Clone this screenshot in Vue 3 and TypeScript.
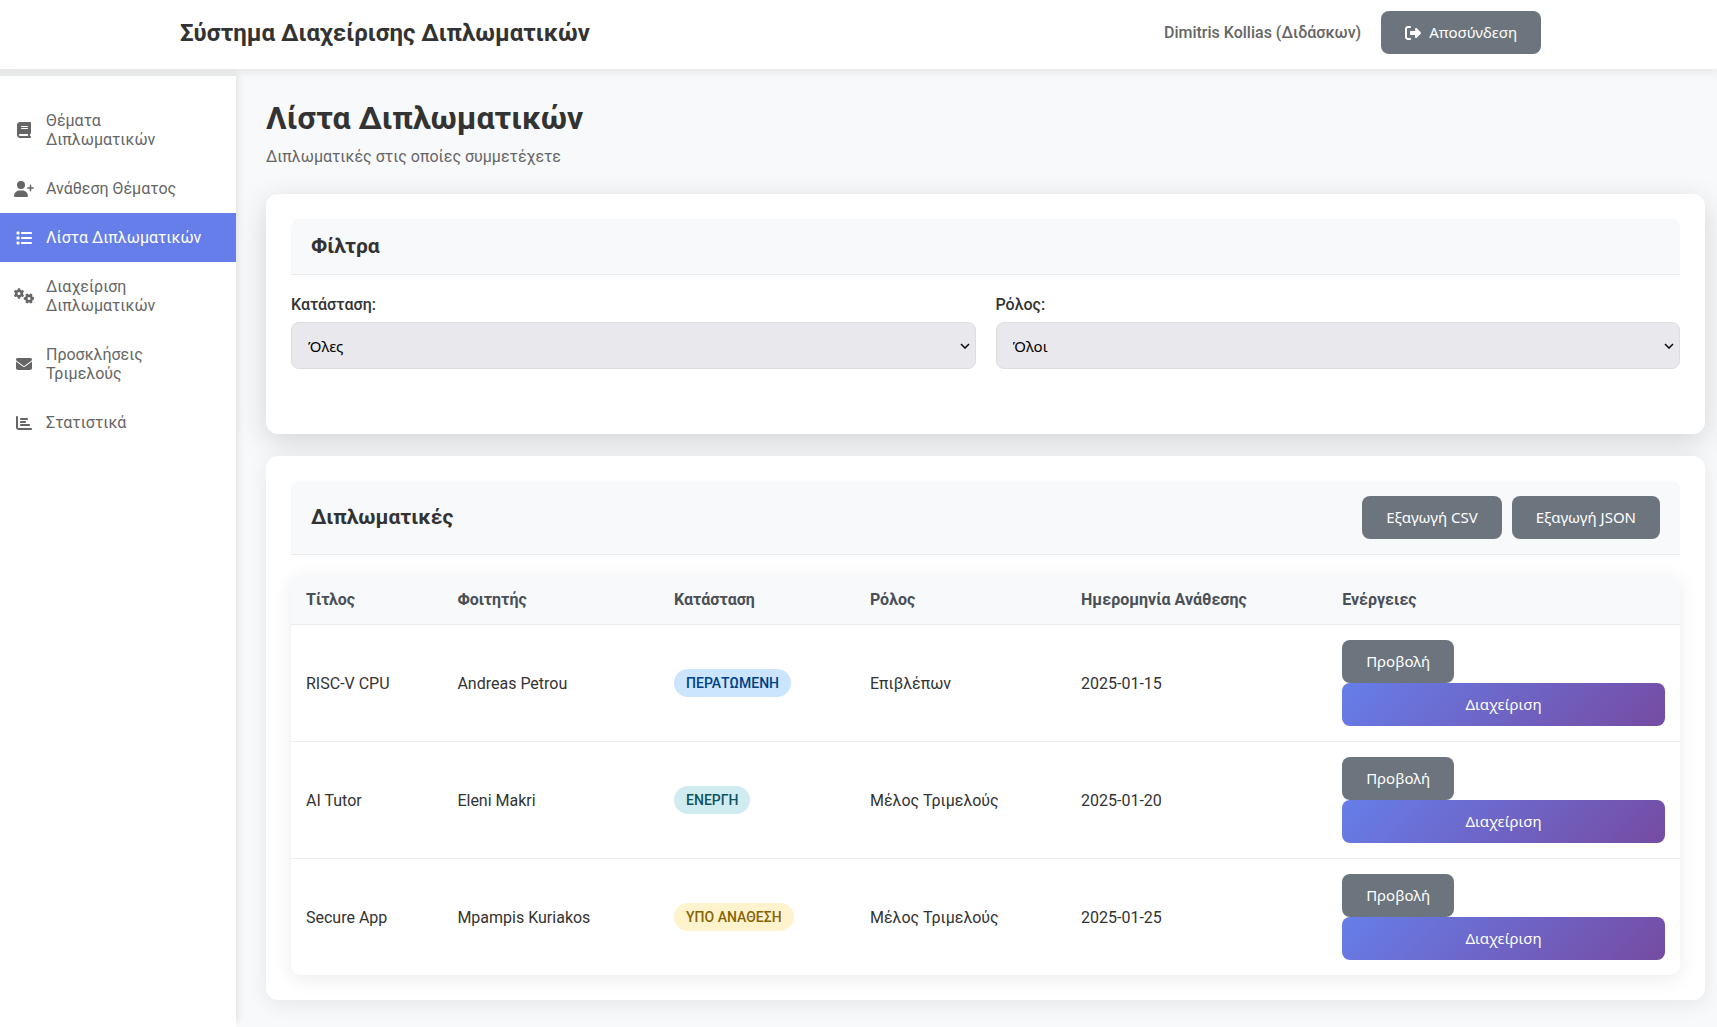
<script setup lang="ts">
import { ref } from 'vue'

interface NavItem {
  label: string
  width: number
  path: string
  active?: boolean
  twin?: string
}

interface Thesis {
  title: string
  student: string
  status: string
  tone: string
  role: string
  date: string
}

const navItems: NavItem[] = [
  {
    label: 'Θέματα Διπλωματικών',
    width: 448,
    path: 'M96 0C43 0 0 43 0 96V416c0 53 43 96 96 96H384h32c17.7 0 32-14.3 32-32s-14.3-32-32-32V384c17.7 0 32-14.3 32-32V32c0-17.7-14.3-32-32-32H384 96zm0 384H352v64H96c-17.7 0-32-14.3-32-32s14.3-32 32-32zm32-240c0-8.8 7.2-16 16-16H336c8.8 0 16 7.2 16 16s-7.2 16-16 16H144c-8.8 0-16-7.2-16-16zm16 48H336c8.8 0 16 7.2 16 16s-7.2 16-16 16H144c-8.8 0-16-7.2-16-16s7.2-16 16-16z',
  },
  {
    label: 'Ανάθεση Θέματος',
    width: 640,
    path: 'M96 128a128 128 0 1 1 256 0A128 128 0 1 1 96 128zM0 482.3C0 383.8 79.8 304 178.3 304h91.4C368.2 304 448 383.8 448 482.3c0 16.4-13.3 29.7-29.7 29.7H29.7C13.3 512 0 498.7 0 482.3zM504 312V248H440c-13.3 0-24-10.7-24-24s10.7-24 24-24h64V136c0-13.3 10.7-24 24-24s24 10.7 24 24v64h64c13.3 0 24 10.7 24 24s-10.7 24-24 24H552v64c0 13.3-10.7 24-24 24s-24-10.7-24-24z',
  },
  {
    label: 'Λίστα Διπλωματικών',
    width: 512,
    active: true,
    path: 'M40 48C26.7 48 16 58.7 16 72v48c0 13.3 10.7 24 24 24H88c13.3 0 24-10.7 24-24V72c0-13.3-10.7-24-24-24H40zM192 64c-17.7 0-32 14.3-32 32s14.3 32 32 32H480c17.7 0 32-14.3 32-32s-14.3-32-32-32H192zm0 160c-17.7 0-32 14.3-32 32s14.3 32 32 32H480c17.7 0 32-14.3 32-32s-14.3-32-32-32H192zm0 160c-17.7 0-32 14.3-32 32s14.3 32 32 32H480c17.7 0 32-14.3 32-32s-14.3-32-32-32H192zM16 232v48c0 13.3 10.7 24 24 24H88c13.3 0 24-10.7 24-24V232c0-13.3-10.7-24-24-24H40c-13.3 0-24 10.7-24 24zM40 368c-13.3 0-24 10.7-24 24v48c0 13.3 10.7 24 24 24H88c13.3 0 24-10.7 24-24V392c0-13.3-10.7-24-24-24H40z',
  },
  {
    label: 'Διαχείριση Διπλωματικών',
    width: 640,
    path: 'M308.5 135.3c7.1-6.3 9.9-16.2 6.2-25c-2.3-5.3-4.8-10.5-7.6-15.5L304 89.4c-3-5-6.3-9.9-9.8-14.6c-5.7-7.6-15.7-10.1-24.7-7.1l-28.2 9.3c-10.7-8.8-23-16-36.2-20.9L199 27.1c-1.9-9.3-9.1-16.7-18.5-17.8C173.9 8.4 167.2 8 160.4 8h-.7c-6.8 0-13.5 .4-20.1 1.2c-9.4 1.1-16.6 8.6-18.5 17.8L115 56.1c-13.3 5-25.5 12.1-36.2 20.9L50.5 67.8c-9-3-19-.5-24.7 7.1c-3.5 4.7-6.8 9.6-9.9 14.6l-3 5.3c-2.8 5-5.3 10.2-7.6 15.6c-3.7 8.7-.9 18.6 6.2 25l22.2 19.8C32.6 161.9 32 168.9 32 176s.6 14.1 1.7 20.9L11.5 216.7c-7.1 6.3-9.9 16.2-6.2 25c2.3 5.3 4.8 10.5 7.6 15.6l3 5.2c3 5.1 6.3 9.9 9.9 14.6c5.7 7.6 15.7 10.1 24.7 7.1l28.2-9.3c10.7 8.8 23 16 36.2 20.9l6.1 29.1c1.9 9.3 9.1 16.7 18.5 17.8c6.7 .8 13.5 1.2 20.4 1.2s13.7-.4 20.4-1.2c9.4-1.1 16.6-8.6 18.5-17.8l6.1-29.1c13.3-5 25.5-12.1 36.2-20.9l28.2 9.3c9 3 19 .5 24.7-7.1c3.5-4.7 6.8-9.5 9.8-14.6l3.1-5.4c2.8-5 5.3-10.2 7.6-15.5c3.7-8.7 .9-18.6-6.2-25l-22.2-19.8c1.1-6.8 1.7-13.8 1.7-20.9s-.6-14.1-1.7-20.9l22.2-19.8zM112 176a48 48 0 1 1 96 0 48 48 0 1 1 -96 0z',
    twin: 'translate(480 336) rotate(90) translate(-160 -176)',
  },
  {
    label: 'Προσκλήσεις Τριμελούς',
    width: 512,
    path: 'M48 64C21.5 64 0 85.5 0 112c0 15.1 7.1 29.3 19.2 38.4L236.8 313.6c11.4 8.5 27 8.5 38.4 0L492.8 150.4c12.1-9.1 19.2-23.3 19.2-38.4c0-26.5-21.5-48-48-48H48zM0 176V384c0 35.3 28.7 64 64 64H448c35.3 0 64-28.7 64-64V176L294.4 339.2c-22.8 17.1-54 17.1-76.8 0L0 176z',
  },
  {
    label: 'Στατιστικά',
    width: 512,
    path: 'M32 32c17.7 0 32 14.3 32 32V400c0 8.8 7.2 16 16 16H480c17.7 0 32 14.3 32 32s-14.3 32-32 32H80c-44.2 0-80-35.8-80-80V64C0 46.3 14.3 32 32 32zm96 96c0-17.7 14.3-32 32-32l192 0c17.7 0 32 14.3 32 32s-14.3 32-32 32l-192 0c-17.7 0-32-14.3-32-32zm32 64H288c17.7 0 32 14.3 32 32s-14.3 32-32 32H160c-17.7 0-32-14.3-32-32s14.3-32 32-32zm0 96H416c17.7 0 32 14.3 32 32s-14.3 32-32 32H160c-17.7 0-32-14.3-32-32s14.3-32 32-32z',
  },
]

const theses: Thesis[] = [
  { title: 'RISC-V CPU', student: 'Andreas Petrou', status: 'ΠΕΡΑΤΩΜΕΝΗ', tone: 'done', role: 'Επιβλέπων', date: '2025-01-15' },
  { title: 'AI Tutor', student: 'Eleni Makri', status: 'ΕΝΕΡΓΗ', tone: 'live', role: 'Μέλος Τριμελούς', date: '2025-01-20' },
  { title: 'Secure App', student: 'Mpampis Kuriakos', status: 'ΥΠΟ ΑΝΑΘΕΣΗ', tone: 'pending', role: 'Μέλος Τριμελούς', date: '2025-01-25' },
]

const status = ref('all')
const role = ref('all')
</script>

<template>
  <div class="app">
    <header class="topbar">
      <div class="topbar-inner">
        <div class="brand">Σύστημα Διαχείρισης Διπλωματικών</div>
        <div class="account">
          <span class="user">Dimitris Kollias (Διδάσκων)</span>
          <button type="button" class="btn">
            <svg class="btn-icon" viewBox="0 0 512 512" aria-hidden="true">
              <path d="M377.9 105.9L500.7 228.7c7.2 7.2 11.3 17.1 11.3 27.3s-4.1 20.1-11.3 27.3L377.9 406.1c-6.4 6.4-15 9.9-24 9.9c-18.7 0-33.9-15.2-33.9-33.9l0-62.1-128 0c-17.7 0-32-14.3-32-32l0-64c0-17.7 14.3-32 32-32l128 0 0-62.1c0-18.7 15.2-33.9 33.9-33.9c9 0 17.6 3.6 24 9.9zM160 96L96 96c-17.7 0-32 14.3-32 32l0 256c0 17.7 14.3 32 32 32l64 0c17.7 0 32 14.3 32 32s-14.3 32-32 32l-64 0c-53 0-96-43-96-96L0 128C0 75 43 32 96 32l64 0c17.7 0 32 14.3 32 32s-14.3 32-32 32z" />
            </svg>
            Αποσύνδεση
          </button>
        </div>
      </div>
    </header>

    <div class="body">
      <nav class="sidebar">
        <a v-for="item in navItems" :key="item.label" href="#" class="nav-link" :class="{ active: item.active }">
          <span class="nav-icon">
            <svg height="16" :viewBox="`0 0 ${item.width} 512`" aria-hidden="true">
              <path :d="item.path" />
              <path v-if="item.twin" :d="item.path" :transform="item.twin" />
            </svg>
          </span>
          <span>{{ item.label }}</span>
        </a>
      </nav>

      <main class="content">
        <h1>Λίστα Διπλωματικών</h1>
        <p class="subtitle">Διπλωματικές στις οποίες συμμετέχετε</p>

        <section class="card raised">
          <div class="card-header">
            <h2>Φίλτρα</h2>
          </div>
          <div class="filters">
            <div class="field">
              <label for="status">Κατάσταση:</label>
              <select id="status" v-model="status">
                <option value="all">Όλες</option>
                <option value="live">Ενεργή</option>
                <option value="pending">Υπό Ανάθεση</option>
                <option value="done">Περατωμένη</option>
              </select>
            </div>
            <div class="field">
              <label for="role">Ρόλος:</label>
              <select id="role" v-model="role">
                <option value="all">Όλοι</option>
                <option value="supervisor">Επιβλέπων</option>
                <option value="member">Μέλος Τριμελούς</option>
              </select>
            </div>
          </div>
        </section>

        <section class="card">
          <div class="card-header">
            <h2>Διπλωματικές</h2>
            <div class="exports">
              <button type="button" class="btn">Εξαγωγή CSV</button>
              <button type="button" class="btn">Εξαγωγή JSON</button>
            </div>
          </div>
          <table>
            <thead>
              <tr>
                <th class="col-title">Τίτλος</th>
                <th class="col-student">Φοιτητής</th>
                <th class="col-status">Κατάσταση</th>
                <th class="col-role">Ρόλος</th>
                <th class="col-date">Ημερομηνία Ανάθεσης</th>
                <th>Ενέργειες</th>
              </tr>
            </thead>
            <tbody>
              <tr v-for="t in theses" :key="t.title">
                <td>{{ t.title }}</td>
                <td>{{ t.student }}</td>
                <td><span class="badge" :class="t.tone">{{ t.status }}</span></td>
                <td>{{ t.role }}</td>
                <td>{{ t.date }}</td>
                <td>
                  <div class="actions">
                    <button type="button" class="btn">Προβολή</button>
                    <button type="button" class="btn primary">Διαχείριση</button>
                  </div>
                </td>
              </tr>
            </tbody>
          </table>
        </section>
      </main>
    </div>
  </div>
</template>

<style>
body {
  margin: 0;
  background: #f8f9fb;
}
</style>

<style scoped>
.app,
.app * {
  box-sizing: border-box;
}

.app {
  display: flex;
  flex-direction: column;
  min-height: 100vh;
  color: #333;
  font-family: Roboto, sans-serif;
  font-size: 16px;
  line-height: 19px;
}

.topbar {
  position: relative;
  z-index: 1;
  padding: 11px 176px 15px 180px;
  background: #fff;
  box-shadow: 0 2px 10px rgba(0, 0, 0, 0.1);
}

.topbar-inner {
  display: flex;
  align-items: center;
  justify-content: space-between;
}

.brand {
  font-size: 24px;
  font-weight: 700;
  line-height: 28px;
}

.account {
  display: flex;
  align-items: center;
  gap: 20px;
}

.user {
  color: #666;
  font-weight: 500;
}

.btn {
  display: flex;
  align-items: center;
  justify-content: center;
  gap: 8px;
  height: 43px;
  padding: 0 24px;
  border: 0;
  border-radius: 8px;
  background: #6c757d;
  color: #fff;
  font-family: "Noto Sans", sans-serif;
  font-size: 15px;
  line-height: 19px;
  white-space: nowrap;
  cursor: pointer;
}

.btn.primary {
  background: linear-gradient(135deg, #667eea 0%, #764ba2 100%);
}

.btn-icon {
  width: 16px;
  height: 16px;
  fill: currentColor;
}

.body {
  display: flex;
  flex: 1;
}

.sidebar {
  position: relative;
  z-index: 2;
  flex: 0 0 236px;
  padding-top: 20px;
  border-top: 7px solid #e7e9e9;
  background: #fff;
  box-shadow: 7px 0 8px -6px rgba(0, 0, 0, 0.12);
}

.nav-link {
  display: flex;
  align-items: center;
  gap: 12px;
  padding: 15px 25px 15px 14px;
  color: #666;
  text-decoration: none;
}

.nav-link.active {
  background: #667eea;
  color: #fff;
}

.nav-icon {
  display: flex;
  flex: 0 0 20px;
  justify-content: center;
}

.nav-icon svg {
  fill: currentColor;
}

.content {
  flex: 1;
  min-width: 0;
  padding: 30px 12px 26px 30px;
}

h1 {
  margin: 0 0 10px;
  font-size: 32px;
  font-weight: 700;
  line-height: 38px;
}

.subtitle {
  margin: 0 0 28px;
  color: #666;
}

.card {
  padding: 25px;
  border-radius: 12px;
  background: #fff;
  box-shadow: 0 4px 20px rgba(0, 0, 0, 0.08);
}

.card.raised {
  margin-bottom: 22px;
  padding-bottom: 65px;
  box-shadow: 0 8px 30px rgba(0, 0, 0, 0.15);
}

.card-header {
  display: flex;
  align-items: center;
  justify-content: space-between;
  margin-bottom: 20px;
  padding: 15px 20px;
  border-bottom: 1px solid #e9ecef;
  border-radius: 8px 8px 0 0;
  background: #f8f9fa;
}

h2 {
  margin: 0;
  font-size: 21px;
  font-weight: 700;
  line-height: 25px;
}

.exports {
  display: flex;
  gap: 10px;
}

.filters {
  display: grid;
  grid-template-columns: 1fr 1fr;
  gap: 20px;
}

.field {
  display: flex;
  flex-direction: column;
  gap: 8px;
}

.field label {
  font-weight: 500;
}

.field select {
  appearance: none;
  height: 47px;
  padding: 0 24px 0 16px;
  border: 1px solid #dddde2;
  border-radius: 8px;
  background: #e9e8ed url("data:image/svg+xml,%3Csvg xmlns='http://www.w3.org/2000/svg' width='10' height='6'%3E%3Cpath d='M1 1l4 4 4-4' fill='none' stroke='%23111' stroke-width='1.6'/%3E%3C/svg%3E") no-repeat right 5px center;
  color: #000;
  font-family: "Noto Sans", sans-serif;
  font-size: 15px;
}

table {
  width: 100%;
  table-layout: fixed;
  border-spacing: 0;
  overflow: hidden;
  border-radius: 10px;
  background: #fff;
  box-shadow: 0 4px 20px rgba(0, 0, 0, 0.08);
}

th,
td {
  padding: 15px;
  border-bottom: 1px solid #e9ecef;
  text-align: left;
  vertical-align: middle;
}

th {
  background: #f8f9fa;
  color: #495057;
  font-weight: 700;
}

tbody tr:last-child td {
  border-bottom: 0;
}

.col-title {
  width: 10.9%;
}

.col-student {
  width: 15.6%;
}

.col-status {
  width: 14.1%;
}

.col-role {
  width: 15.2%;
}

.col-date {
  width: 18.8%;
}

.actions {
  display: flex;
  flex-direction: column;
}

.actions .btn:first-child {
  align-self: flex-start;
}

.badge {
  display: inline-block;
  padding: 6px 12px;
  border-radius: 20px;
  font-size: 14px;
  font-weight: 500;
  line-height: 16px;
}

.badge.done {
  background: #cce5ff;
  color: #004085;
}

.badge.live {
  background: #d1ecf1;
  color: #0c5460;
}

.badge.pending {
  background: #fff3cd;
  color: #856404;
}
</style>
